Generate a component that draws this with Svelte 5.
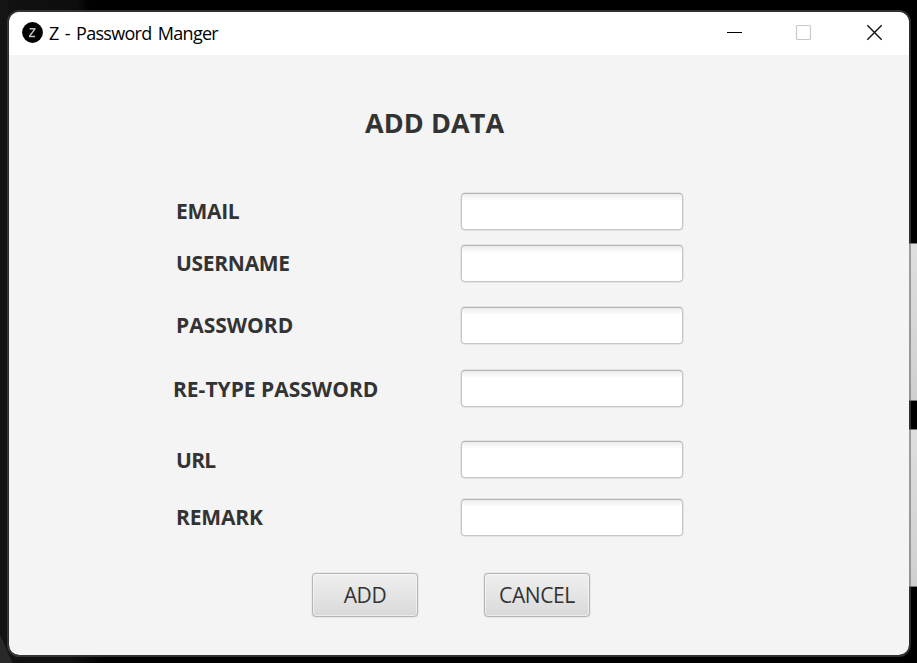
<script>
  const fields = [
    { id: 'email', label: 'EMAIL', type: 'text' },
    { id: 'username', label: 'USERNAME', type: 'text' },
    { id: 'password', label: 'PASSWORD', type: 'password' },
    { id: 'retype', label: 'RE-TYPE PASSWORD', type: 'password' },
    { id: 'url', label: 'URL', type: 'text' },
    { id: 'remark', label: 'REMARK', type: 'text' }
  ];
</script>

<div class="desktop">
  <div class="strip upper"></div>
  <div class="strip lower"></div>
  <div class="window">
    <header>
      <svg class="logo" width="21" height="21" viewBox="0 0 21 21">
        <circle cx="10.5" cy="10.5" r="10.4" fill="#000" />
        <path d="M7.6 6.7H12.8V7.3L7.6 14V14.5H13.1" fill="none" stroke="#c0c0c0" stroke-width="1.4" />
      </svg>
      <span class="caption">Z - Password Manger</span>
      <svg class="controls" width="160" height="20" viewBox="0 0 160 20">
        <path d="M2 10.5H17" stroke="#000" />
        <rect x="71.5" y="3.5" width="14" height="14" rx="1" fill="none" stroke="#c8c8c8" stroke-width="1.2" />
        <path d="M142.3 3.3L156.7 17.7M156.7 3.3L142.3 17.7" stroke="#111" stroke-width="1.4" />
      </svg>
    </header>
    <main>
      <h1>ADD DATA</h1>
      <form onsubmit={(e) => e.preventDefault()}>
        {#each fields as f}
          <div class="row {f.id}">
            <label for={f.id}>{f.label}</label>
            <input id={f.id} type={f.type} />
          </div>
        {/each}
        <div class="actions">
          <button class="add">ADD</button>
          <button class="cancel">CANCEL</button>
        </div>
      </form>
    </main>
  </div>
</div>

<style>
  :global(body) { margin: 0; }
  .desktop {
    position: relative;
    box-sizing: border-box;
    width: 917px;
    height: 663px;
    padding: 10px 0 0 7px;
    overflow: hidden;
    background:
      linear-gradient(66deg, #292929 0 11px, transparent 12px),
      linear-gradient(90deg, #141414 0 8px, transparent 8px),
      linear-gradient(90deg, #111 0, #111 70px, #000 105px) 0 100% / 100% 20px no-repeat,
      linear-gradient(90deg, #111 0, #0e0e0e 76px, #000 90px) 0 0 / 100% 20px no-repeat,
      #000;
    font-family: "Open Sans", "Noto Sans", sans-serif;
    color: #333;
  }
  .strip {
    position: absolute;
    right: 0;
    width: 10px;
    background: linear-gradient(#dedede, #d0d0d0);
    border: solid #777;
    border-width: 1px 0;
    box-sizing: border-box;
  }
  .upper { top: 243px; height: 158px; }
  .lower { top: 429px; height: 158px; }
  .window {
    position: relative;
    box-sizing: border-box;
    width: 904px;
    height: 647px;
    border: 2px solid rgba(65, 65, 65, 0.75);
    border-right-color: rgba(90, 90, 90, 0.5);
    border-radius: 12px;
    background: #f4f4f4;
    background-clip: padding-box;
    overflow: hidden;
  }
  header {
    display: flex;
    align-items: center;
    box-sizing: border-box;
    height: 43px;
    padding: 0 24px 2px 13px;
    background: #fff;
  }
  .logo { flex: none; }
  .caption {
    margin: 1px auto 0 6px;
    font-size: 18px;
    line-height: 24px;
    letter-spacing: -0.7px;
    word-spacing: 2.2px;
    color: #000;
    white-space: nowrap;
  }
  .controls { flex: none; margin-bottom: 1px; }
  h1 {
    margin: 0;
    padding: 49px 0 0 356px;
    font-size: 27px;
    line-height: 37px;
    font-weight: 700;
    letter-spacing: 0.08px;
    white-space: nowrap;
  }
  form { padding-top: 52px; }
  .row {
    display: flex;
    align-items: center;
    height: 38px;
    padding-left: 167px;
  }
  .username { margin-top: 14px; }
  .password { margin-top: 24px; }
  .retype { margin-top: 25px; padding-left: 164px; }
  .url { margin-top: 32px; }
  .remark { margin-top: 21px; }
  label {
    flex: none;
    width: 284px;
    padding-bottom: 2px;
    font-size: 21px;
    line-height: 30px;
    font-weight: 700;
    white-space: nowrap;
  }
  .email label, .username label { letter-spacing: -0.3px; }
  .remark label { letter-spacing: -0.15px; }
  .url label { letter-spacing: -0.7px; }
  .retype label { width: 287px; padding-bottom: 0; }
  .url label { padding: 2px 0 0; }
  input {
    box-sizing: border-box;
    width: 222px;
    height: 37px;
    margin: 0 0 1px 0.5px;
    padding: 0 10px;
    border: 1px solid #c6c6c6;
    border-top-color: #b3b3b3;
    border-radius: 4px;
    background: linear-gradient(#ececec, #fff 7px);
    box-shadow: 0 0 0 0.5px rgba(0, 0, 0, 0.1), 0 0 1px rgba(0, 0, 0, 0.18);
    font: 21px "Open Sans", sans-serif;
    outline: none;
  }
  .url input { margin-bottom: 0; }
  .actions {
    display: flex;
    gap: 66px;
    padding: 36px 0 0 303px;
  }
  button {
    box-sizing: border-box;
    width: 106px;
    height: 44px;
    padding: 0;
    border: 1px solid #b5b5b5;
    border-radius: 4px;
    background: linear-gradient(#efefef, #d9d9d9);
    box-shadow: inset 0 0 0 1px rgba(255, 255, 255, 0.5), 0 0 1px rgba(0, 0, 0, 0.45);
    font: 400 21px/30px "Open Sans", "Noto Sans", sans-serif;
    letter-spacing: -0.4px;
    color: #333;
  }
</style>
